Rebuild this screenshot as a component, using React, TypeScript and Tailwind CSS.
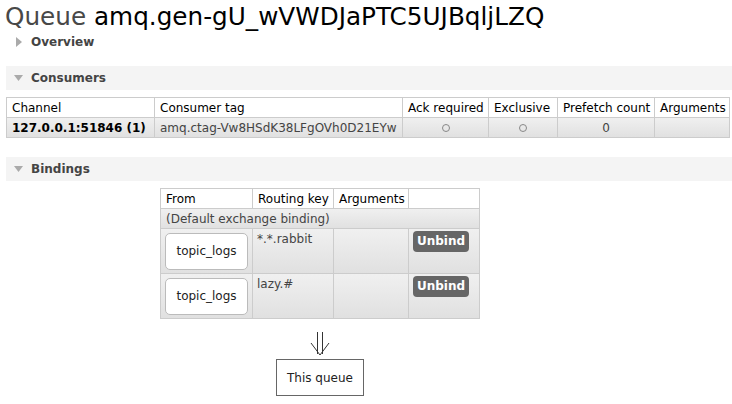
const font = { fontFamily: '"DejaVu Sans", Verdana, sans-serif' };

function SectionBar({ title }: { title: string }) {
  return (
    <div className="flex items-center h-[24px] bg-[#f4f4f4] pl-[8px]">
      <svg width="9" height="6" viewBox="0 0 9 6">
        <path d="M0 0 L9 0 L4.5 6 Z" fill="#aaa" />
      </svg>
      <span className="ml-[8px] text-[12px] font-bold text-[#444]">{title}</span>
    </div>
  );
}

function Circle() {
  return <span className="inline-block w-[8px] h-[8px] rounded-full border border-[#888] align-middle" />;
}

export default function App() {
  const rowBg = 'bg-gradient-to-b from-[#f0f0f0] to-[#e0e0e0]';
  const cell = 'border border-[#ccc] px-[5px] h-[20px] leading-[18px] whitespace-nowrap';
  return (
    <div className="bg-white min-h-screen text-[12px] text-black overflow-hidden" style={font}>
      <div className="pl-[6px]">
        <h1 className="text-[24.7px] leading-[30px] pt-[2px] -ml-[1px] whitespace-nowrap">
          <span className="text-[#484848]">Queue</span> <span>amq.gen-gU_wVWDJaPTC5UJBqljLZQ</span>
        </h1>
        <div className="flex items-center h-[20px] pl-[10px]">
          <svg width="6" height="10" viewBox="0 0 6 10">
            <path d="M0 0 L6 5 L0 10 Z" fill="#aaa" />
          </svg>
          <span className="ml-[9px] font-bold text-[#444]">Overview</span>
        </div>

        <div className="mt-[14px]">
          <SectionBar title="Consumers" />
        </div>
        <table className="mt-[7px] table-fixed border-collapse w-[723px]">
          <colgroup>
            <col className="w-[148px]" />
            <col className="w-[248px]" />
            <col className="w-[86px]" />
            <col className="w-[69px]" />
            <col className="w-[97px]" />
            <col className="w-[75px]" />
          </colgroup>
          <thead>
            <tr className="bg-white">
              <th className={`${cell} font-normal text-left`}>Channel</th>
              <th className={`${cell} font-normal text-left`}>Consumer tag</th>
              <th className={`${cell} font-normal text-left`}>Ack required</th>
              <th className={`${cell} font-normal text-left`}>Exclusive</th>
              <th className={`${cell} font-normal text-left`}>Prefetch count</th>
              <th className={`${cell} font-normal text-left`}>Arguments</th>
            </tr>
          </thead>
          <tbody>
            <tr className={rowBg}>
              <td className={`${cell} font-bold`}>127.0.0.1:51846 (1)</td>
              <td className={`${cell} text-[#444] overflow-hidden`}>amq.ctag-Vw8HSdK38LFgOVh0D21EYw</td>
              <td className={`${cell} text-center`}><Circle /></td>
              <td className={`${cell} text-center`}><Circle /></td>
              <td className={`${cell} text-center text-[#444]`}>0</td>
              <td className={cell}></td>
            </tr>
          </tbody>
        </table>

        <div className="mt-[19px]">
          <SectionBar title="Bindings" />
        </div>

        <div className="flex flex-col items-center w-[620px] mt-[7px] ml-[4px]">
          <table className="table-fixed border-collapse w-[319px]">
            <colgroup>
              <col className="w-[92px]" />
              <col className="w-[81px]" />
              <col className="w-[75px]" />
              <col className="w-[71px]" />
            </colgroup>
            <thead>
              <tr className="bg-white">
                <th className={`${cell} font-normal text-left`}>From</th>
                <th className={`${cell} font-normal text-left`}>Routing key</th>
                <th className={`${cell} font-normal text-left`}>Arguments</th>
                <th className={cell}></th>
              </tr>
            </thead>
            <tbody>
              <tr className={rowBg}>
                <td colSpan={4} className={`${cell} text-[#444]`}>(Default exchange binding)</td>
              </tr>
              {['*.*.rabbit', 'lazy.#'].map((key) => (
                <tr key={key} className={rowBg}>
                  <td className="border border-[#ccc] h-[45px] px-[4px]">
                    <div className="h-[37px] bg-white border border-[#bbb] rounded-[5px] flex items-center justify-center text-[#222]">
                      topic_logs
                    </div>
                  </td>
                  <td className="border border-[#ccc] align-top px-[4px] pt-[2px] text-[#444] leading-[16px]">{key}</td>
                  <td className="border border-[#ccc]"></td>
                  <td className="border border-[#ccc] align-top pt-[2px] pl-[4px]">
                    <button className="w-[56px] h-[21px] rounded-[4px] bg-[#666] text-white font-semibold text-[12px] leading-[21px]">
                      Unbind
                    </button>
                  </td>
                </tr>
              ))}
            </tbody>
          </table>
          <div className="mt-[13px] h-[24px] flex justify-center">
            <svg width="20" height="24" viewBox="0 0 20 24">
              <path d="M7.5 0 V22 M12.5 0 V22" stroke="#333" strokeWidth="1" fill="none" />
              <path d="M1 11 L10 23 L19 11" stroke="#333" strokeWidth="1" fill="none" />
            </svg>
          </div>
          <div className="mt-[3px] w-[88px] h-[37px] border border-[#666] flex items-center justify-center text-[#222]">
            This queue
          </div>
        </div>
      </div>
    </div>
  );
}
